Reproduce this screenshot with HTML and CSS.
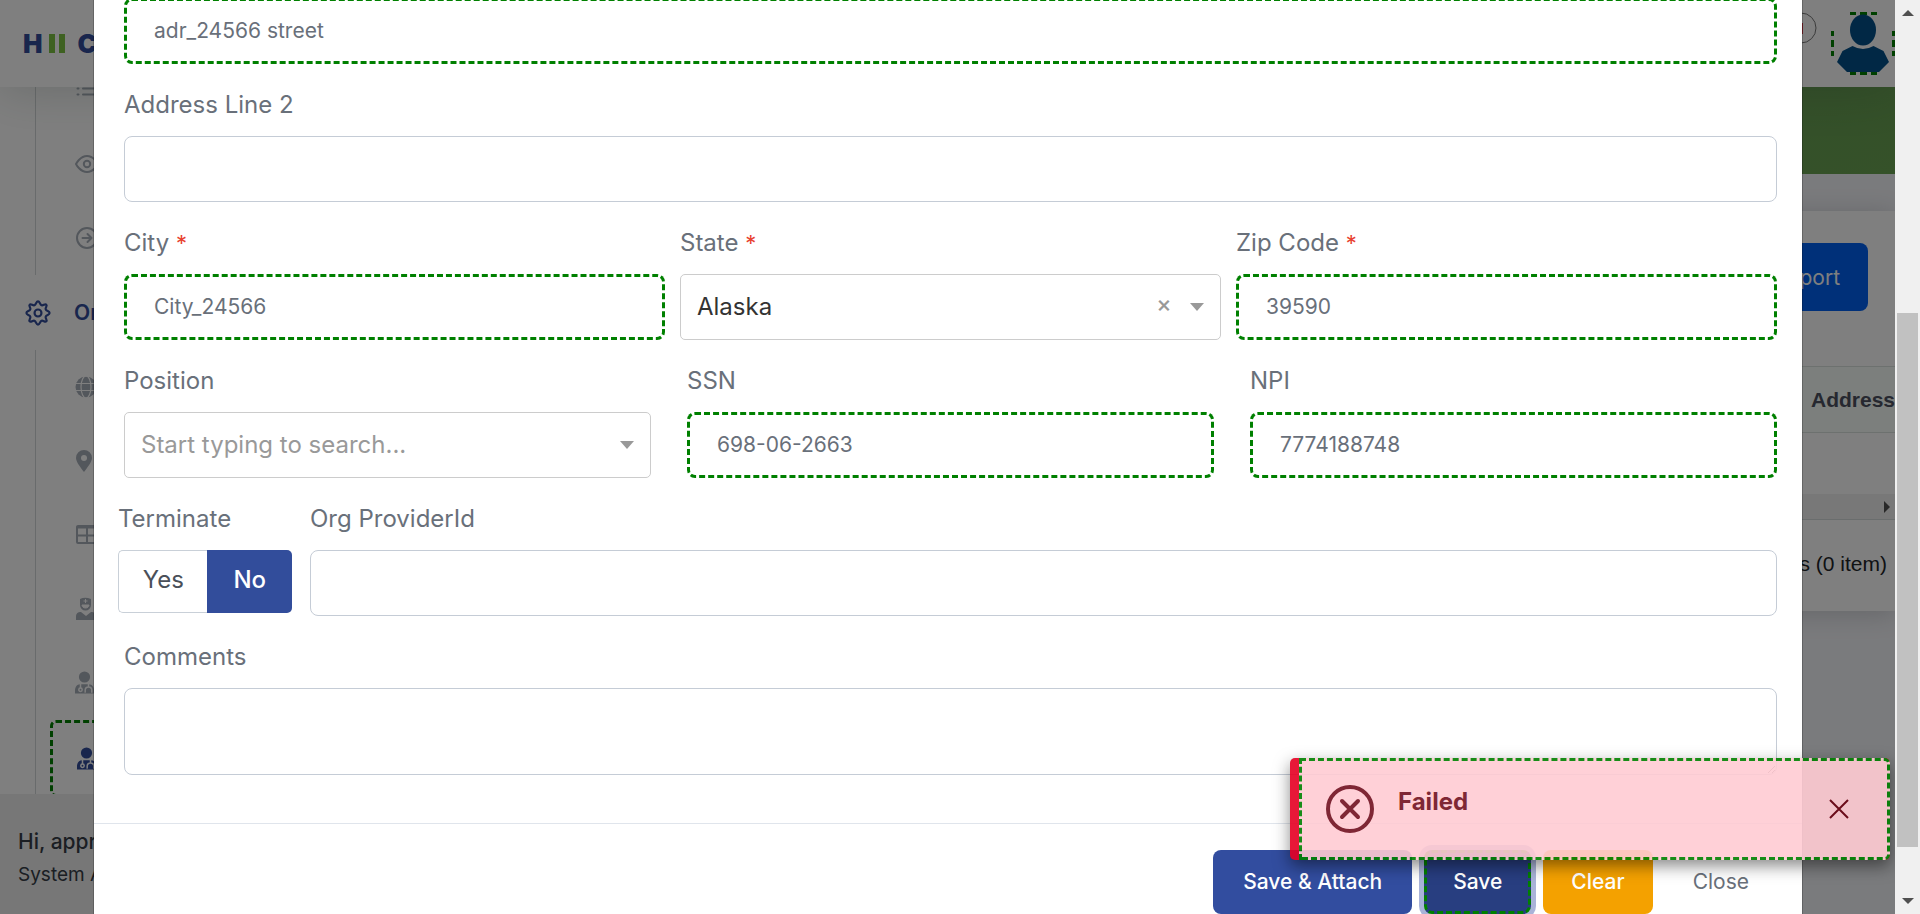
FILE: index.html
```html
<!DOCTYPE html>
<html lang="en">
<head>
<meta charset="utf-8">
<title>HII C</title>
<link rel="stylesheet" href="styles.css">
</head>
<body>
<svg class="sprite" aria-hidden="true">
  <symbol id="user-md" viewBox="0 0 24 24">
    <circle cx="9.500" cy="6" r="5.600" fill="currentColor"/>
    <path d="M0 22.500v-3c0-4 2-6 5-6.300h9c3 .3 5 2.300 5 6.300v3z" fill="currentColor"/>
    <g fill="none" stroke="var(--hole)" stroke-width="1.500"><path d="M5.500 13v4M13.500 13v2.500M10.800 21h-.6v-1.700c0-4.400 6.600-4.400 6.600 0V21h-.8"/><circle cx="5.500" cy="18.800" r="1.700"/></g>
  </symbol>
</svg>
<div class="window">
  <div class="app">
    <header class="topbar">
      <div class="logo"><b>H</b><i></i><i></i><b class="logo-c">C</b></div>
      <div class="topbar-tools">
        <svg class="flag" viewBox="0 0 32 32"><circle cx="16" cy="16" r="15" fill="none" stroke="#777" stroke-width="1"/><rect x="6" y="11" width="12" height="11" fill="#e33b4b"/></svg>
        <svg class="avatar" viewBox="0 0 64 64">
          <path d="M19 1.500h6m4 0h7m4 0h6M19 61.500h6m4 0h7m4 0h6M1.500 19v5m0 4v7m0 4v5M62.500 19v5m0 4v7m0 4v5" stroke="#008000" stroke-width="3" fill="none"/>
          <ellipse cx="32" cy="18" rx="13" ry="15.500" fill="#03508a"/>
          <path d="M21.500 34q10.500 6 21 0l10 5 5.500 11-10 10h-32l-10-10 5.500-11z" fill="#03508a"/>
        </svg>
      </div>
    </header>
    <div class="workspace">
      <nav class="sidebar">
        <div class="menu">
          <div class="group">
            <a class="item" href="#"><svg viewBox="0 0 24 24" class="ico"><path d="M8 4h15M8 10.500h15M8 16.500h15M2.500 4h1M2.500 10.500h1M2.500 16.500h1" class="line"/></svg></a>
            <a class="item" href="#"><svg viewBox="0 0 24 24" class="ico"><path d="M1 12s4-8 11-8 11 8 11 8-4 8-11 8S1 12 1 12z" class="line"/><circle cx="12" cy="12" r="3.200" class="line"/></svg></a>
            <a class="item" href="#"><svg viewBox="0 0 24 24" class="ico"><circle cx="12" cy="12" r="10" class="line"/><path d="M7.500 12h9M12.500 8l4 4-4 4" class="line"/></svg></a>
          </div>
          <a class="item parent" href="#">
            <svg viewBox="0 0 24 24" class="gear"><path d="M12 1.300c1.700 0 1.700 3 3.300 3.600 1.500.6 3.200-1.800 4.400-.6s-1.200 2.900-.6 4.400c.6 1.600 3.600 1.600 3.600 3.300s-3 1.700-3.600 3.300c-.6 1.500 1.800 3.200.6 4.400s-2.900-1.200-4.400-.6c-1.600.6-1.600 3.600-3.300 3.600s-1.700-3-3.300-3.600c-1.500-.6-3.200 1.800-4.400.6s1.200-2.900.6-4.400c-.6-1.600-3.600-1.600-3.600-3.300s3-1.700 3.600-3.300c.6-1.500-1.800-3.200-.6-4.400s2.900 1.200 4.400.6C10.300 4.300 10.300 1.300 12 1.300z" class="line"/><circle cx="12" cy="12" r="3.200" class="line"/></svg>
            <span>Or</span>
          </a>
          <div class="group">
            <a class="item" href="#"><svg viewBox="0 0 24 24" class="ico"><circle cx="11" cy="12" r="10.500" fill="currentColor"/><g fill="none" stroke="#fff" stroke-width="1.200"><ellipse cx="11" cy="12" rx="5" ry="11"/><path d="M0 8.500h22M0 15.500h22"/></g></svg></a>
            <a class="item" href="#"><svg viewBox="0 0 24 24" class="ico"><path d="M9 1a8 8 0 0 1 8 8c0 4-5 10-8 14C6 19 1 13 1 9a8 8 0 0 1 8-8z" fill="currentColor"/><circle cx="9" cy="9" r="3" fill="#fff"/></svg></a>
            <a class="item" href="#"><svg viewBox="0 0 24 24" class="ico"><rect x="2" y="3" width="22" height="17" rx="1" class="line"/><path d="M2 4.500h22M2 12.500h22M12 5v15" class="line"/></svg></a>
            <a class="item" href="#"><svg viewBox="0 0 24 24" class="ico"><path d="M5 2q5-2.500 11 0v6a5.500 5.500 0 0 1-11 0z" fill="currentColor"/><path d="M10.500 2v4M8.500 4h4M7 8h7c0 4-7 4-7 0z" fill="#fff" stroke="#fff" stroke-width="1"/><path d="M1 23v-3c0-4 2-5 5-5l5 4 5-4c3 0 5 1 5 5v3z" fill="currentColor"/></svg></a>
            <a class="item" href="#"><svg viewBox="0 0 24 24" class="ico"><use href="#user-md"/></svg></a>
            <a class="item active" href="#"><svg viewBox="0 0 24 24" class="ico"><use href="#user-md"/></svg></a>
          </div>
        </div>
        <div class="profile"><div class="hello">Hi, appr</div><div class="role">System A</div></div>
      </nav>
      <main class="main">
        <div class="banner"></div>
        <section class="card">
          <div class="card-bar"><button class="export" type="button">Export</button></div>
          <table class="grid"><thead><tr><th>Address</th></tr></thead><tbody><tr><td></td></tr></tbody></table>
          <div class="hscroll"><i></i></div>
          <div class="pager">1 of 1 pages (0 item)</div>
        </section>
      </main>
    </div>
    <div class="overlay">
      <form class="modal">
        <div class="body">
          <input class="box valid" id="adr1" aria-label="Address" value="adr_24566 street">
          <div class="field"><label for="adr2">Address Line 2</label><input class="box" id="adr2"></div>
          <div class="row">
            <div class="field"><label for="city">City <em>*</em></label><input class="box valid" id="city" value="City_24566"></div>
            <div class="field"><label for="state">State <em>*</em></label>
              <div class="picker"><select class="box" id="state"><option>Alaska</option></select>
                <button class="wipe" type="button">×</button><i class="caret"></i></div></div>
            <div class="field"><label for="zip">Zip Code <em>*</em></label><input class="box valid" id="zip" value="39590"></div>
          </div>
          <div class="row wide">
            <div class="field"><label for="pos">Position</label>
              <div class="picker"><select class="box empty" id="pos"><option>Start typing to search...</option></select><i class="caret"></i></div></div>
            <div class="field"><label for="ssn">SSN</label><input class="box valid" id="ssn" value="698-06-2663"></div>
            <div class="field"><label for="npi">NPI</label><input class="box valid" id="npi" value="7774188748"></div>
          </div>
          <div class="split">
            <div class="field"><label for="no">Terminate</label>
              <div class="toggle"><button type="button">Yes</button><button type="button" id="no" class="on">No</button></div></div>
            <div class="field"><label for="org">Org ProviderId</label><input class="box" id="org"></div>
          </div>
          <div class="field"><label for="com">Comments</label><textarea class="box area" id="com"></textarea></div>
        </div>
        <div class="footer">
          <button type="button" class="btn primary">Save &amp; Attach</button>
          <button type="button" class="btn focused">Save</button>
          <button type="button" class="btn warn">Clear</button>
          <button type="button" class="btn plain">Close</button>
        </div>
      </form>
    </div>
    <div class="toast" role="alert">
      <div class="toast-in">
        <svg class="fail" viewBox="0 0 48 48"><g fill="none" stroke="currentColor" stroke-width="4" stroke-linecap="round"><circle cx="24" cy="24" r="22"/><path d="M16 16l16 16M32 16L16 32"/></g></svg>
        <strong>Failed</strong>
        <button class="dismiss" type="button" aria-label="Close"><svg viewBox="0 0 20 20"><path d="M1 1l18 18M19 1L1 19" stroke="currentColor" stroke-width="2" fill="none"/></svg></button>
      </div>
    </div>
  </div>
  <div class="vscroll"><i class="up"></i><i class="thumb"></i><i class="down"></i></div>
</div>
</body>
</html>
```
FILE: styles.css
```css
* { box-sizing: border-box; }
body { margin: 0; overflow: hidden; font-family: Inter, "Open Sans", sans-serif; color: #69707a; }
button, input, select, textarea { font: inherit; }
button { cursor: pointer; }
.sprite { display: none; }
.window { display: flex; height: 100vh; overflow: hidden; }
.app { position: relative; flex: 1; min-width: 0; display: flex; flex-direction: column; overflow: hidden; }

.topbar { position: relative; z-index: 1; flex: none; height: 87px; padding-left: 23px; background: #fff; display: flex; align-items: center; justify-content: space-between; box-shadow: 0 3px 48px rgba(33, 60, 50, .2); }
.logo { display: flex; align-items: center; gap: 4px; color: #324d9b; font-size: 26px; font-weight: 900; line-height: 26px; }
.logo b { margin-right: 2px; }
.logo i { width: 6px; height: 19px; background: #7cc242; }
.logo .logo-c { margin-left: 9px; }
.topbar-tools { display: flex; align-items: flex-start; gap: 14px; height: 87px; padding-top: 12px; }
.flag { width: 32px; height: 32px; }
.avatar { width: 64px; height: 64px; }

.workspace { flex: 1; min-height: 0; display: flex; }
.sidebar { flex: none; width: 384px; background: #fff; display: flex; flex-direction: column; overflow: hidden; }
.menu { flex: 1; min-height: 0; overflow: hidden; display: flex; flex-direction: column; justify-content: flex-end; }
.group { flex: none; margin-left: 35px; border-left: 1px solid #d2d6d8; }
.item { display: flex; align-items: center; height: 74px; padding-left: 39px; color: #a7aeb8; text-decoration: none; --hole: #fff; }
.ico { width: 24px; height: 24px; }
.line { fill: none; stroke: currentColor; stroke-width: 2; stroke-linecap: round; stroke-linejoin: round; }
.parent { flex: none; height: 75px; padding-left: 25px; gap: 23px; color: #324d9b; font-size: 21px; font-weight: 600; }
.gear { width: 26px; height: 26px; }
.active { height: 77px; margin: 0 0 -3px 14px; padding-left: 24px; border: 3px dashed #008000; border-radius: 6px; color: #324d9b; }
.profile { position: relative; flex: none; height: 120px; padding: 33px 18px; background: #eee; color: #363d47; white-space: nowrap; }
.hello { font-size: 21px; line-height: 30px; font-weight: 500; }
.role { font-size: 19px; line-height: 36px; }

.main { flex: 1; min-width: 0; background: #f5f6fa; }
.banner { height: 87px; background: linear-gradient(160deg, #648f5c, #6aa452); }
.card { margin: 37px 0 0 32px; height: 400px; background: #fff; font-family: "Liberation Sans", Arial, sans-serif; font-size: 21px; color: #212529; box-shadow: 0 3px 24px rgba(33, 40, 50, .2); }
.card-bar { height: 155px; padding: 32px 27px; display: flex; justify-content: flex-end; align-items: flex-start; }
.export { height: 68px; padding: 0 28px; border: 0; border-radius: 8px; background: #0061f2; color: #fff; font-family: Inter, sans-serif; font-size: 21px; }
.grid { width: 100%; border-collapse: collapse; text-align: right; }
.grid th { height: 66px; padding: 0; background: #f8fffa; border: 1px solid #dbe2df; border-width: 1px 0; color: #4c5060; }
.grid td { height: 61px; padding: 0; }
.hscroll { height: 26px; padding: 7px 5px; background: #f0f0f0; border-bottom: 1px solid #d5dada; display: flex; justify-content: flex-end; }
.hscroll i { border-left: 6px solid #505050; border-top: 6px solid transparent; border-bottom: 6px solid transparent; height: 12px; }
.pager { padding: 0 8px; line-height: 88px; text-align: right; }

.overlay { position: absolute; inset: 0; z-index: 2; padding: 0 93px 0 94px; background: rgba(0, 0, 0, .5); overflow: hidden; }
.modal { background: #fff; box-shadow: 0 0 0 1px rgba(0, 0, 0, .2); margin-top: -2px; }
.body { padding: 0 25px 48px 30px; }
.field { min-width: 0; }
.field label { display: block; padding: 23px 0 13px; font-size: 24px; line-height: 36px; }
.field em { color: #e8412f; font-size: 22px; font-style: normal; }
.box { display: block; width: 100%; height: 66px; padding: 0 29px 2px; border: 1px solid #c5ccd6; border-radius: 8px; background: #fff; color: #69707a; font-size: 21px; outline: 0; }
.valid { border: 3px dashed #008000; padding: 0 27px 2px; }
.area { height: 87px; resize: vertical; }
.row { display: grid; grid-template-columns: repeat(3, 1fr); gap: 15px; }
.wide { gap: 36px; }
.picker { position: relative; }
.picker .box { appearance: none; padding: 0 16px 2px; border-color: #ccc; border-radius: 5px; color: #333; font-size: 24px; }
.picker .empty { color: #999; }
.caret { position: absolute; right: 17px; top: 29px; border: 7px solid transparent; border-top: 8px solid #999; border-bottom: 0; pointer-events: none; }
.wipe { position: absolute; right: 48px; top: 16px; width: 18px; height: 28px; padding: 0; border: 0; background: none; color: #999; font-size: 23px; font-weight: 500; line-height: 28px; }
.split { display: grid; grid-template-columns: 174px 1fr; gap: 18px; margin-left: -6px; }
.toggle { display: flex; height: 63px; }
.toggle button { flex: 89; padding: 0 0 4px; border: 1px solid #c9d0d8; border-right: 0; border-radius: 5px 0 0 5px; background: #fff; color: #4a5059; font-size: 24px; }
.toggle .on { flex: 85; border: 0; border-radius: 0 5px 5px 0; background: #324d9b; color: #fff; font-weight: 500; }
.footer { display: flex; justify-content: flex-end; gap: 12px; padding: 26px 25px 30px; border-top: 1px solid #e0e5ec; }
.btn { height: 64px; padding: 0 28px 2px; border: 0; border-radius: 8px; color: #fff; font-size: 21px; white-space: nowrap; }
.primary, .focused, .warn { font-weight: 500; }
.primary { padding: 0 30px 2px; background: #324d9f; }
.focused { background: #283e80; border: 3px dashed #008000; padding: 0 26px 2px; box-shadow: 0 0 0 5px #a9b3d8; }
.warn { background: #f4a100; }
.plain { background: none; color: #69707a; }

.toast { position: absolute; z-index: 3; right: 5px; bottom: 54px; width: 600px; height: 102px; padding-left: 9px; border-radius: 5px; background: #e60023; opacity: .9; box-shadow: 0 6px 16px rgba(0, 0, 0, .5); overflow: hidden; }
.toast-in { display: flex; align-items: center; height: 100%; padding: 0 38px 0 24px; border: 3px dashed #008000; border-radius: 0 5px 5px 0; background: #ffcbd3; color: #721020; }
.toast strong { flex: 1; padding: 0 0 14px 24px; font-size: 24px; font-weight: 700; line-height: 36px; }
.fail { width: 48px; height: 48px; }
.dismiss { width: 20px; height: 20px; padding: 0; border: 0; background: none; color: #6a0010; }
.dismiss svg { display: block; width: 20px; height: 20px; }

.vscroll { flex: none; width: 25px; padding: 10px 2px; background: #f0f0f0; display: grid; grid-template-rows: 6px 297fr 534fr 51fr 6px; justify-items: center; }
.vscroll .up { grid-row: 1; border: 6px solid transparent; border-bottom-color: #505050; border-top: 0; }
.vscroll .thumb { grid-row: 3; width: 100%; background: #c1c1c1; }
.vscroll .down { grid-row: 5; border: 6px solid transparent; border-top-color: #505050; border-bottom: 0; }
```
